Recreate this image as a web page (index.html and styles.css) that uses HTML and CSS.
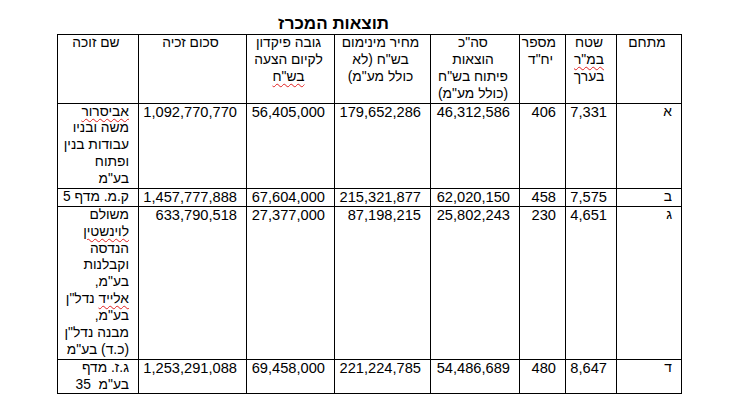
FILE: index.html
```html
<!DOCTYPE html>
<html lang="he" dir="rtl">
<head>
<meta charset="utf-8">
<title>תוצאות המכרז</title>
<link rel="stylesheet" href="styles.css">
</head>
<body>
<div class="page">
  <h1 class="title">תוצאות המכרז</h1>
  <table class="results">
    <colgroup>
      <col class="c1"><col class="c2"><col class="c3"><col class="c4"><col class="c5"><col class="c6"><col class="c7"><col class="c8">
    </colgroup>
    <thead>
      <tr>
        <th>מתחם</th>
        <th>שטח<br><span class="sp">במ"ר</span><br>בערך</th>
        <th>מספר<br>יח"ד</th>
        <th>סה"כ<br>הוצאות<br>פיתוח בש"ח<br>(כולל מע"מ)</th>
        <th>מחיר מינימום<br>בש"ח (לא<br>כולל מע"מ)</th>
        <th>גובה פיקדון<br>לקיום הצעה<br><span class="sp">בש"ח</span></th>
        <th>סכום זכיה</th>
        <th>שם זוכה</th>
      </tr>
    </thead>
    <tbody>
      <tr>
        <td class="he">א</td><td>7,331</td><td>406</td><td>46,312,586</td><td>179,652,286</td><td>56,405,000</td><td>1,092,770,770</td>
        <td class="he"><span class="sp">אביסרור</span><br>משה ובניו<br>עבודות בנין<br>ופתוח<br>בע"מ</td>
      </tr>
      <tr>
        <td class="he">ב</td><td>7,575</td><td>458</td><td>62,020,150</td><td>215,321,877</td><td>67,604,000</td><td>1,457,777,888</td>
        <td class="he">ק.מ. מדף 5</td>
      </tr>
      <tr>
        <td class="he">ג</td><td>4,651</td><td>230</td><td>25,802,243</td><td>87,198,215</td><td>27,377,000</td><td>633,790,518</td>
        <td class="he">משולם<br><span class="sp">לוינשטין</span><br>הנדסה<br>וקבלנות<br>בע"מ,<br><span class="sp">אלייד</span> נדל"ן<br>בע"מ,<br>מבנה נדל"ן<br>(כ.ד) בע"מ</td>
      </tr>
      <tr>
        <td class="he">ד</td><td>8,647</td><td>480</td><td>54,486,689</td><td>221,224,785</td><td>69,458,000</td><td>1,253,291,088</td>
        <td class="he">ג.ז. מדף<br>בע"מ&nbsp; 35</td>
      </tr>
    </tbody>
  </table>
</div>
</body>
</html>
```

FILE: styles.css
```css
html, body {
  margin: 0;
  padding: 0;
  background: #ffffff;
}

body {
  font-family: "Liberation Sans", Arial, "DejaVu Sans", sans-serif;
  color: #000000;
}

.page {
  width: 729px;
  height: 417px;
  padding-top: 13px;
  box-sizing: border-box;
}

.title {
  margin: 0 340px 0 0;
  font-size: 17px;
  font-weight: bold;
  line-height: 21px;
  text-align: right;
}

.results {
  direction: rtl;
  border-collapse: collapse;
  table-layout: fixed;
  width: 625px;
  margin: 0 47px 0 auto;
  font-size: 14.67px;
  line-height: 16.87px;
}

.c1 { width: 65px; }
.c2 { width: 51px; }
.c3 { width: 46px; }
.c4 { width: 89px; }
.c5 { width: 96px; }
.c6 { width: 88px; }
.c7 { width: 108px; }
.c8 { width: 81px; }

.results th,
.results td {
  border: 1px solid #000000;
  padding: 0 9px 0 5px;
  vertical-align: top;
  white-space: nowrap;
  overflow: visible;
}

.results th {
  font-weight: normal;
  font-size: 13.8px;
  text-align: center;
}

.results td {
  text-align: right;
}

.results td.he {
  font-size: 13.8px;
}

.sp {
  text-decoration: underline wavy #e02020;
  text-decoration-thickness: 1px;
  text-underline-offset: 2px;
}
```
